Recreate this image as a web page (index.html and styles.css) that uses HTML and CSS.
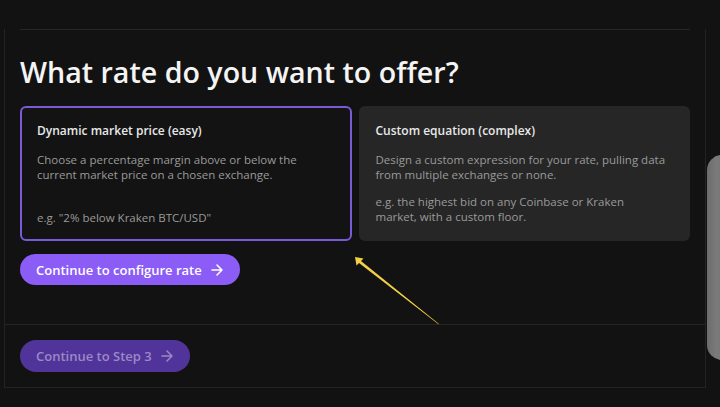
FILE: index.html
```html
<!DOCTYPE html>
<html lang="en">
<head>
  <meta charset="UTF-8" />
  <meta name="viewport" content="width=device-width, initial-scale=1.0"/>
  <title>Rate type</title>
  <link rel="stylesheet" href="styles.css">
</head>
<body>
  <div class="panel">
    <div class="step">
      <hr class="divider" />
      <h1>What rate do you want to offer?</h1>

      <div class="options">
        <div class="option selected">
          <h3>Dynamic market price (easy)</h3>
          <p>Choose a percentage margin above or below the current market price on a chosen exchange.</p>
          <p class="example">e.g. "2% below Kraken BTC/USD"</p>
        </div>
        <div class="option">
          <h3>Custom equation (complex)</h3>
          <p>Design a custom expression for your rate, pulling data from multiple exchanges or none.</p>
          <p class="example">e.g. the highest bid on any Coinbase or Kraken market, with a custom floor.</p>
        </div>
      </div>

      <button class="btn">
        Continue to configure rate
        <svg class="arrow" width="12" height="12" viewBox="0 0 12 12"><path d="M1 6h10M6 1l5 5-5 5" fill="none" stroke="currentColor" stroke-width="1.5" stroke-linecap="round" stroke-linejoin="round"/></svg>
      </button>
    </div>

    <div class="footer">
      <button class="btn disabled">
        Continue to Step 3
        <svg class="arrow" width="12" height="12" viewBox="0 0 12 12"><path d="M1 6h10M6 1l5 5-5 5" fill="none" stroke="currentColor" stroke-width="1.5" stroke-linecap="round" stroke-linejoin="round"/></svg>
      </button>
    </div>
  </div>

  <!-- annotation pointer -->
  <svg class="pointer" width="90" height="74" viewBox="0 0 90 74">
    <polygon points="3,3 11.5,4.5 9,7 87,70 86.5,70.3 7,9 4.5,11.5" fill="#f2cf45" />
  </svg>

  <div class="side-handle"></div>
</body>
</html>
```

FILE: styles.css
```css
body {
  font-family: "Open Sans", Arial, sans-serif;
  background-color: #121212;
  margin: 0;
  height: 407px;
  overflow: hidden;
  position: relative;
}

.panel {
  margin-left: 4px;
  width: 700px;
  border: 1px solid #232323;
  border-top: none;
}

.step {
  padding: 0 15px 39px;
}

.divider {
  border: none;
  height: 1px;
  background-color: #262626;
  margin: 29px 0 0;
}

h1 {
  color: #f4f4f4;
  font-size: 28.6px;
  font-weight: 600;
  margin: 22px 0 14px;
  line-height: 40px;
}

.options {
  display: grid;
  grid-template-columns: 1fr 1fr;
  gap: 7px;
}

.option {
  background-color: #262626;
  border: 2px solid transparent;
  border-radius: 6px;
  padding: 14px 20px 14px 15px;
  display: flex;
  flex-direction: column;
  min-height: 135px;
  box-sizing: border-box;
}

.option.selected {
  background-color: #131313;
  border-color: #7b5ad8;
}

.option h3 {
  margin: 0 0 12px;
  font-size: 12px;
  font-weight: 600;
  color: #e8e8e8;
  line-height: 18px;
}

.option p {
  margin: 0;
  font-size: 11.5px;
  line-height: 15px;
  color: #9a9a9a;
}

.option .example {
  margin-top: 12px;
}

.option.selected .example {
  margin-top: auto;
}

.btn {
  font-family: "Open Sans", Arial, sans-serif;
  display: inline-flex;
  align-items: center;
  gap: 9px;
  margin-top: 13px;
  height: 31px;
  padding: 0 17px 0 16px;
  border: none;
  border-radius: 16px;
  background-color: #8b5cf6;
  color: #ffffff;
  font-size: 13px;
  font-weight: 600;
}

.footer {
  border-top: 1px solid #262626;
  padding: 0 15px 15px;
}

.btn.disabled {
  margin-top: 15px;
  height: 32px;
  background-color: #51349a;
  color: #9b89c6;
}

.pointer {
  position: absolute;
  left: 352px;
  top: 254px;
}

.side-handle {
  position: absolute;
  left: 707px;
  top: 155px;
  width: 30px;
  height: 205px;
  border-radius: 15px;
  background: linear-gradient(90deg, #6c6c6c, #7a7a7a 30%, #747474);
}
```
